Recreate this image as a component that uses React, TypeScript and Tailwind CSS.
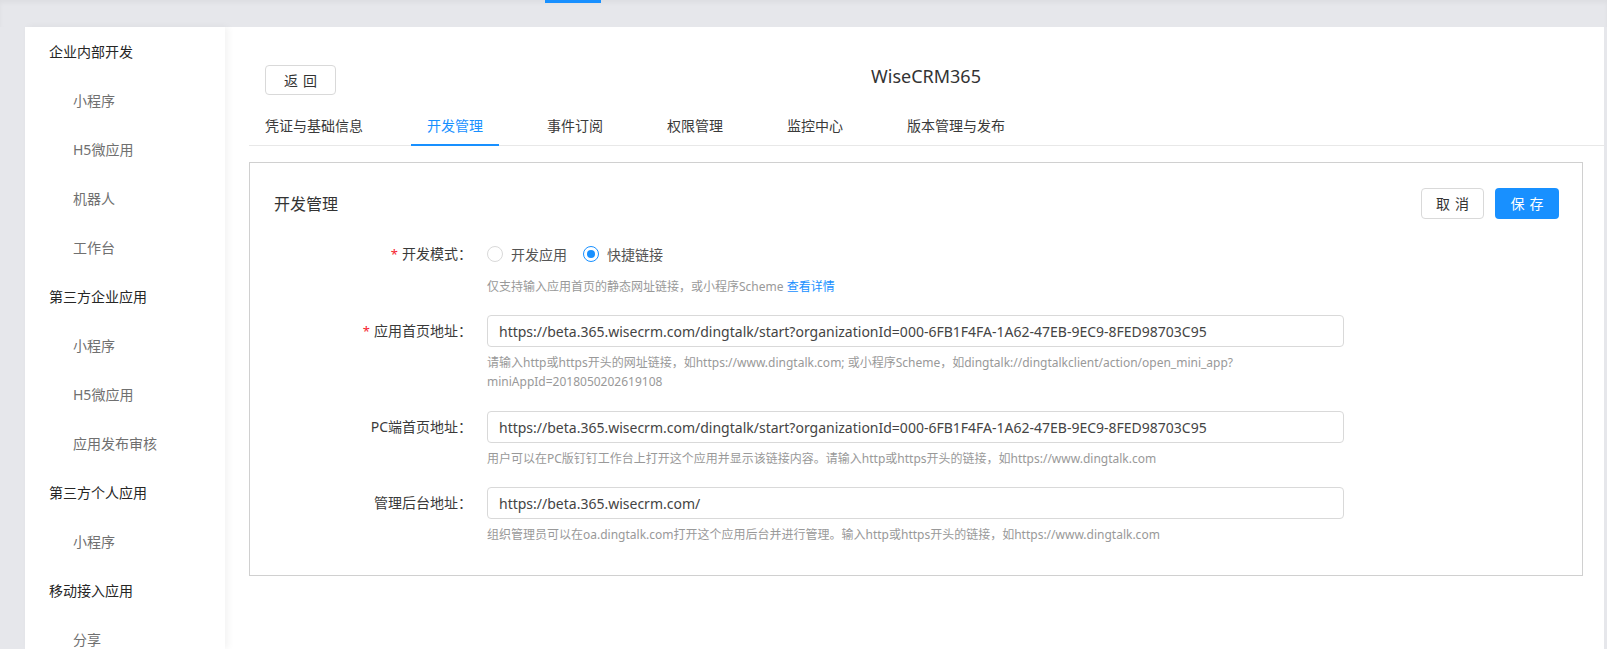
import React, { useState } from 'react';

const menu = [
  { title: '企业内部开发', items: ['小程序', 'H5微应用', '机器人', '工作台'] },
  { title: '第三方企业应用', items: ['小程序', 'H5微应用', '应用发布审核'] },
  { title: '第三方个人应用', items: ['小程序'] },
  { title: '移动接入应用', items: ['分享'] },
];

const tabs = ['凭证与基础信息', '开发管理', '事件订阅', '权限管理', '监控中心', '版本管理与发布'];

const homeUrl =
  'https://beta.365.wisecrm.com/dingtalk/start?organizationId=000-6FB1F4FA-1A62-47EB-9EC9-8FED98703C95';

function Label({ text, required }: { text: string; required?: boolean }) {
  return (
    <div className="w-[198px] shrink-0 text-right text-[14px] leading-[32px] text-[#3a3a3a]">
      {required && <span className="text-[#f5222d] mr-[4px] text-[13px]">*</span>}
      {text}：
    </div>
  );
}

function Radio({ checked, label, onClick }: { checked: boolean; label: string; onClick: () => void }) {
  return (
    <button type="button" onClick={onClick} className="flex items-center">
      <span
        className={
          checked
            ? 'w-4 h-4 rounded-full border border-[#1890ff] flex items-center justify-center'
            : 'w-4 h-4 rounded-full border border-[#d9d9d9] flex items-center justify-center'
        }
      >
        {checked && <span className="w-2 h-2 rounded-full bg-[#1890ff]" />}
      </span>
      <span className="ml-2 text-[14px] text-[#555]">{label}</span>
    </button>
  );
}

export default function App() {
  const [mode, setMode] = useState('link');
  const [activeTab, setActiveTab] = useState(1);
  const [home, setHome] = useState(homeUrl);
  const [pc, setPc] = useState(homeUrl);
  const [admin, setAdmin] = useState('https://beta.365.wisecrm.com/');

  return (
    <div
      className="w-[1607px] h-[649px] overflow-hidden bg-[#e6e7eb] flex flex-col"
      style={{ fontFamily: '"Noto Sans", "Noto Sans CJK SC", sans-serif' }}
    >
      {/* top strip */}
      <div className="h-[27px] shrink-0 shadow-[inset_0_3px_4px_rgba(0,0,0,0.04)]">
        <div className="ml-[545px] w-[56px] h-[3px] bg-[#1890ff]" />
      </div>

      <div className="flex flex-1 min-h-0 pl-[25px] pr-[3px]">
        {/* Sidebar */}
        <aside className="w-[200px] shrink-0 bg-white relative z-10 shadow-[3px_0_7px_rgba(0,0,0,0.05)]">
          {menu.map((group) => (
            <div key={group.title}>
              <div className="h-[49px] flex items-center pl-[24px] text-[14px] text-[#262626]">{group.title}</div>
              {group.items.map((item) => (
                <div key={item} className="h-[49px] flex items-center pl-[48px] text-[14px] text-[#707070]">
                  {item}
                </div>
              ))}
            </div>
          ))}
        </aside>

        {/* Content */}
        <main className="flex-1 bg-white">
          <div className="grid grid-cols-[1fr_auto_1fr] items-start pt-[38px] pl-[40px] pr-[17px]">
            <div>
              <button className="w-[71px] h-[30px] border border-[#d9d9d9] rounded-[4px] text-[14px] text-[#333] tracking-[5px] pl-[5px]">
                返回
              </button>
            </div>
            <div className="text-[18px] leading-[22px] text-[#333]">WiseCRM365</div>
            <div />
          </div>

          {/* Tabs */}
          <div className="ml-[24px] mt-[11px] flex gap-8 border-b border-[#e8e8e8]">
            {tabs.map((t, i) => (
              <button
                key={t}
                onClick={() => setActiveTab(i)}
                className={
                  i === activeTab
                    ? 'px-4 pt-[9px] pb-[7px] text-[14px] leading-[22px] text-[#1890ff] border-b-2 border-[#1890ff] -mb-px'
                    : 'px-4 pt-[9px] pb-[7px] text-[14px] leading-[22px] text-[#3a3a3a] border-b-2 border-transparent -mb-px'
                }
              >
                {t}
              </button>
            ))}
          </div>

          {/* Card */}
          <div className="ml-[24px] mr-[21px] mt-[16px] border border-[#d0d0d0] pt-[25px] pl-[24px] pr-[23px] pb-[31px]">
            <div className="h-[31px] flex items-center justify-between">
              <div className="text-[16px] text-[#333]">开发管理</div>
              <div className="flex gap-[11px]">
                <button className="w-[63px] h-[31px] border border-[#d9d9d9] rounded-[4px] text-[14px] text-[#333] tracking-[5px] pl-[5px]">
                  取消
                </button>
                <button className="w-[64px] h-[31px] bg-[#1890ff] rounded-[4px] text-[14px] text-white tracking-[5px] pl-[5px]">
                  保存
                </button>
              </div>
            </div>

            {/* 开发模式 */}
            <div className="flex gap-[15px] mt-[19px]">
              <Label text="开发模式" required />
              <div>
                <div className="h-[32px] flex items-center gap-4">
                  <Radio checked={mode === 'app'} label="开发应用" onClick={() => setMode('app')} />
                  <Radio checked={mode === 'link'} label="快捷链接" onClick={() => setMode('link')} />
                </div>
                <div className="mt-[7px] text-[12px] leading-[20px] text-[#999]">
                  仅支持输入应用首页的静态网址链接，或小程序Scheme <span className="text-[#1890ff]">查看详情</span>
                </div>
              </div>
            </div>

            {/* 应用首页地址 */}
            <div className="flex gap-[15px] mt-[18px]">
              <Label text="应用首页地址" required />
              <div className="w-[857px]">
                <input
                  value={home}
                  onChange={(e) => setHome(e.target.value)}
                  className="w-full h-[32px] border border-[#d9d9d9] rounded-[4px] px-[11px] text-[14px] text-[#444] outline-none"
                />
                <div className="mt-[6px] text-[12px] leading-[19px] text-[#999]">
                  请输入http或https开头的网址链接，如https://www.dingtalk.com; 或小程序Scheme，如dingtalk://dingtalkclient/action/open_mini_app?
                  <br />
                  miniAppId=2018050202619108
                </div>
              </div>
            </div>

            {/* PC端首页地址 */}
            <div className="flex gap-[15px] mt-[20px]">
              <Label text="PC端首页地址" />
              <div className="w-[857px]">
                <input
                  value={pc}
                  onChange={(e) => setPc(e.target.value)}
                  className="w-full h-[32px] border border-[#d9d9d9] rounded-[4px] px-[11px] text-[14px] text-[#444] outline-none"
                />
                <div className="mt-[6px] text-[12px] leading-[19px] text-[#999]">
                  用户可以在PC版钉钉工作台上打开这个应用并显示该链接内容。请输入http或https开头的链接，如https://www.dingtalk.com
                </div>
              </div>
            </div>

            {/* 管理后台地址 */}
            <div className="flex gap-[15px] mt-[19px]">
              <Label text="管理后台地址" />
              <div className="w-[857px]">
                <input
                  value={admin}
                  onChange={(e) => setAdmin(e.target.value)}
                  className="w-full h-[32px] border border-[#d9d9d9] rounded-[4px] px-[11px] text-[14px] text-[#444] outline-none"
                />
                <div className="mt-[6px] text-[12px] leading-[19px] text-[#999]">
                  组织管理员可以在oa.dingtalk.com打开这个应用后台并进行管理。输入http或https开头的链接，如https://www.dingtalk.com
                </div>
              </div>
            </div>
          </div>
        </main>
      </div>
    </div>
  );
}
